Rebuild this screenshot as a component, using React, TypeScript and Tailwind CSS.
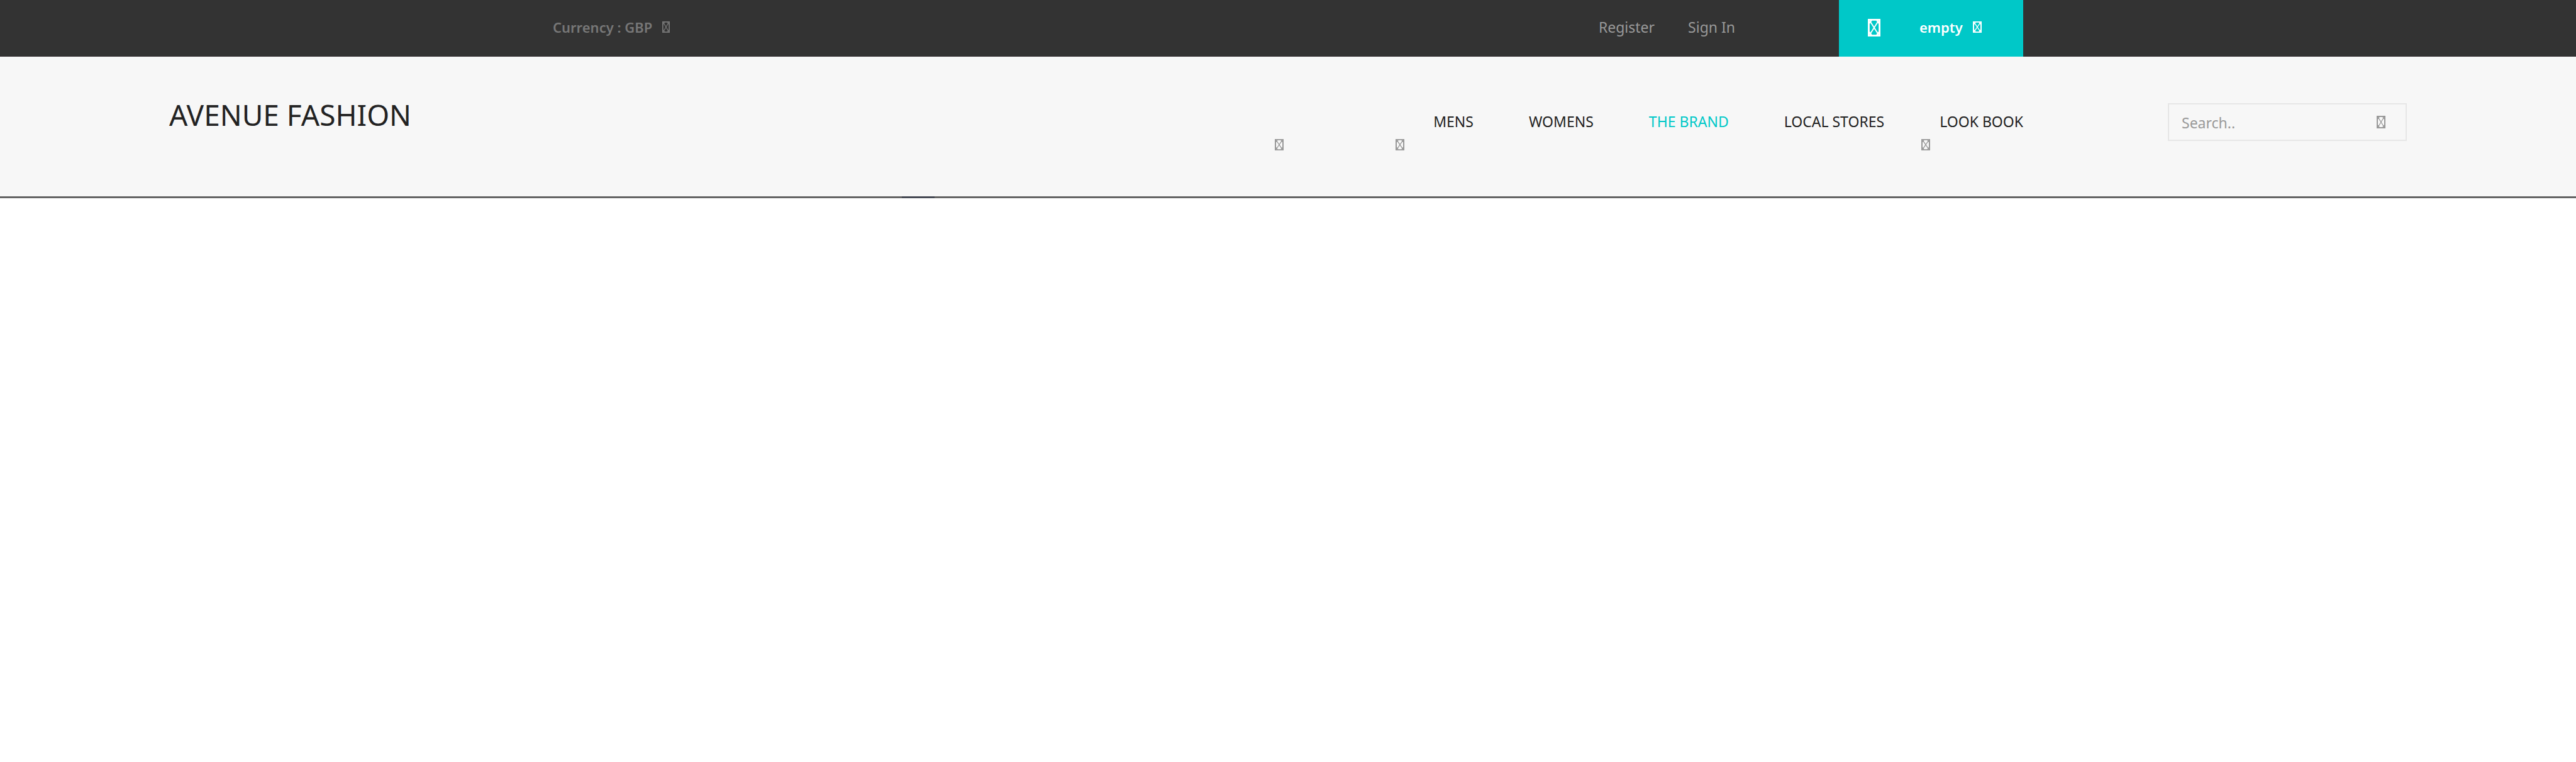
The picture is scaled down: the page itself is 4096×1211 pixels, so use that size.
function BoxGlyph({ className }: { className: string }) {
  return (
    <svg viewBox="0 0 14 20" preserveAspectRatio="none" fill="none" stroke="currentColor" className={className} aria-hidden="true">
      <rect x="1" y="1" width="12" height="18" strokeWidth="2" />
      <path d="M1.5 5L4 1.5M10 1.5L12.5 5M12.5 15L10 18.5M4 18.5L1.5 15" strokeWidth="1.8" />
      <path d="M3 3.5L11 16.5M11 3.5L3 16.5" strokeWidth="1.3" />
    </svg>
  );
}

const links = [
  { label: "MENS" },
  { label: "WOMENS" },
  { label: "THE BRAND", active: true },
  { label: "LOCAL STORES" },
  { label: "LOOK BOOK" },
];

function TopBar() {
  return (
    <div className="bg-[#333333] border-b border-[#2c2729]">
      <div className="mx-auto flex h-[89px] max-w-[2338px] items-stretch">
        <div className="flex flex-1 items-center pb-1">
          <div className="flex items-center gap-4 text-[#777777]">
            <select
              aria-label="Currency"
              className="field-sizing-content appearance-none bg-transparent p-0 text-[22px] font-semibold leading-8"
            >
              <option>Currency : GBP</option>
            </select>
            <BoxGlyph className="h-[18px] w-3" />
          </div>
        </div>
        <div className="mr-[165px] flex items-center gap-[53px] pb-1 text-[#999999]">
          <a href="#register">Register</a>
          <a href="#sign-in">Sign In</a>
        </div>
        <button type="button" className="-mb-px flex w-[293px] items-center bg-[#00c8c8] pb-1 pl-[46px] text-white">
          <BoxGlyph className="mt-[2px] h-7 w-5" />
          <span className="ml-[62px] text-[22px] font-semibold">empty</span>
          <BoxGlyph className="ml-4 h-[18px] w-[14px]" />
        </button>
      </div>
    </div>
  );
}

function Header() {
  return (
    <header className="h-[222px] bg-[#f7f7f7]">
      <div className="mx-auto flex max-w-[3558px] items-start">
        <a href="#home" className="mt-[60px] text-[46px] leading-[64px] text-[#222222]">
          AVENUE FASHION
        </a>
        <nav className="ml-auto mt-[87px]">
          <div className="flex justify-end gap-[88px] text-[#222222]">
            {links.map((l) => (
              <a key={l.label} href="#shop" className={l.active ? "text-[#00c8c8]" : ""}>
                {l.label}
              </a>
            ))}
          </div>
          <div className="mr-[148px] mt-3 flex justify-end text-[#999999]">
            <button type="button" aria-label="Open mens menu">
              <BoxGlyph className="h-[18px] w-[14px]" />
            </button>
            <button type="button" aria-label="Open womens menu" className="ml-[178px]">
              <BoxGlyph className="h-[18px] w-[14px]" />
            </button>
            <button type="button" aria-label="Open look book menu" className="ml-[822px]">
              <BoxGlyph className="h-[18px] w-[14px]" />
            </button>
          </div>
        </nav>
        <form className="ml-[230px] mt-[74px] flex h-[60px] w-[380px] items-center border-2 border-[#e6e6e6] pl-5 pr-8 text-[#999999]">
          <input
            type="search"
            aria-label="Search"
            placeholder="Search.."
            className="mt-[2px] min-w-0 flex-1 bg-transparent leading-8 placeholder:text-[#999999] focus:outline-none"
          />
          <button type="submit" aria-label="Submit search">
            <BoxGlyph className="h-5 w-[14px]" />
          </button>
        </form>
      </div>
    </header>
  );
}

export default function App() {
  return (
    <div className="min-h-screen bg-white font-['Noto_Sans',sans-serif] text-[23px] leading-8">
      <TopBar />
      <Header />
      <div className="flex h-[3px] bg-[#646464]">
        <div className="ml-[35%] w-[52px] bg-[#464a54]" />
      </div>
    </div>
  );
}
